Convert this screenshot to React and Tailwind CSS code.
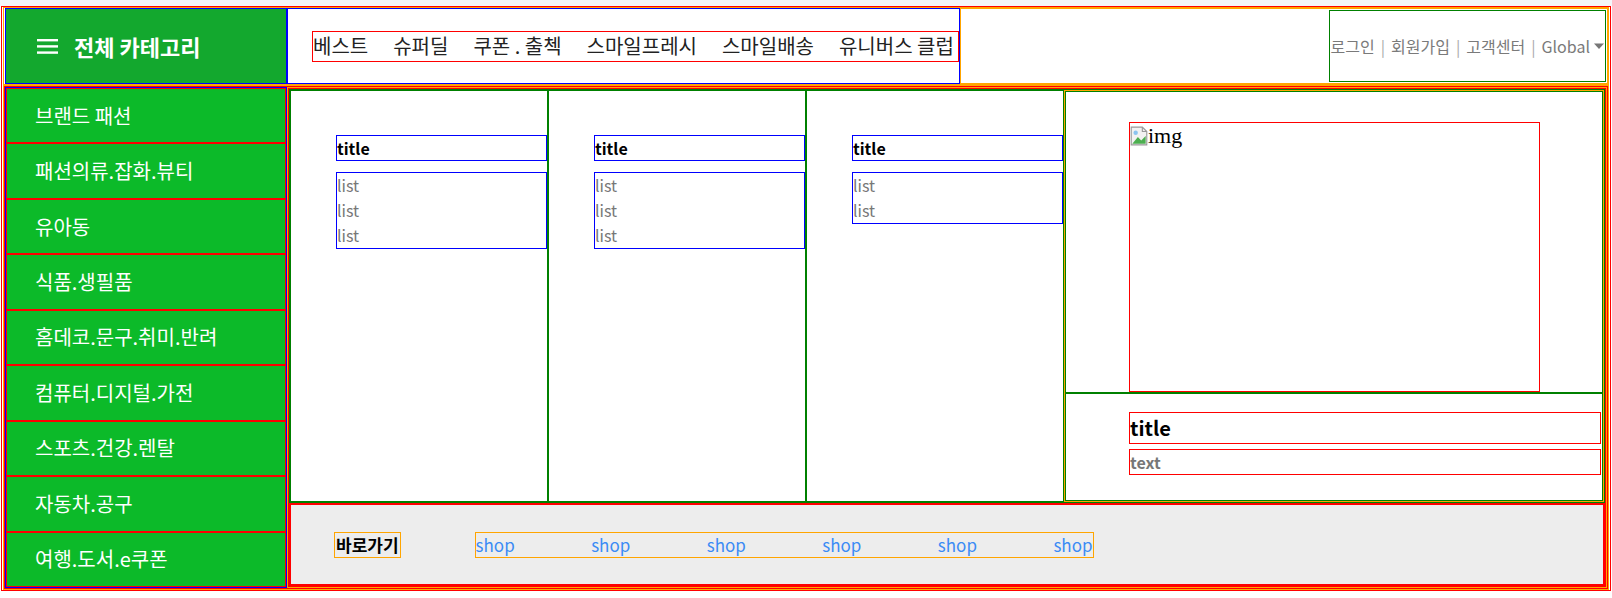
import { ChevronDown } from "lucide-react";

const navItems = ["베스트", "슈퍼딜", "쿠폰 . 출첵", "스마일프레시", "스마일배송", "유니버스 클럽"];

const categories = [
  "브랜드 패션",
  "패션의류.잡화.뷰티",
  "유아동",
  "식품.생필품",
  "홈데코.문구.취미.반려",
  "컴퓨터.디지털.가전",
  "스포츠.건강.렌탈",
  "자동차.공구",
  "여행.도서.e쿠폰",
];

const columns = [3, 3, 2];

const font = { fontFamily: '"Noto Sans CJK KR", "Noto Sans", sans-serif' };

const Column = ({ count }) => (
  <div className="w-[258px] border border-[green] pl-[45px] pt-[44px]">
    <div className="border border-[blue] text-[16px] font-bold leading-[24px] text-black">title</div>
    <ul className="mt-[11px] border border-[blue]">
      {Array.from({ length: count }).map((_, i) => (
        <li key={i} className="text-[16px] leading-[25px] text-[#777]">
          list
        </li>
      ))}
    </ul>
  </div>
);

const App = () => {
  return (
    <div className="min-h-screen bg-white" style={font}>
      <div className="h-[6px] bg-[#f4f6fa]" />

      <div className="mx-[1px] border border-[red] px-[1px]">
        {/* Header */}
        <div className="flex h-[78px] border border-[orange] pl-[1px]">
          <div className="flex w-[282px] items-center gap-[16px] border border-[blue] bg-[#13a82e] pl-[31px]">
            <svg width="21" height="15" viewBox="0 0 21 15">
              <rect x="0" y="0" width="21" height="2.4" fill="white" />
              <rect x="0" y="6.2" width="21" height="2.4" fill="white" />
              <rect x="0" y="12.4" width="21" height="2.4" fill="white" />
            </svg>
            <span className="text-[22px] font-bold text-white">전체 카테고리</span>
          </div>

          <div className="flex w-[673px] items-center border border-[blue] pl-[24px]">
            <ul className="flex h-[31px] flex-1 items-center gap-[25px] border border-[red] pr-[1px]">
              {navItems.map((item) => (
                <li key={item} className="whitespace-nowrap text-[20px] leading-[28px] text-[#222]">
                  {item}
                </li>
              ))}
            </ul>
          </div>

          <div className="flex flex-1 justify-end border border-[orange] py-[1px] pr-[1px]">
            <div className="flex w-[277px] items-center justify-end whitespace-nowrap border border-[green] text-[16px] text-[#7a7a7a]">
              <span>로그인</span>
              <span className="mx-[6px] text-[#aaa]">|</span>
              <span>회원가입</span>
              <span className="mx-[6px] text-[#aaa]">|</span>
              <span>고객센터</span>
              <span className="mx-[6px] text-[#aaa]">|</span>
              <span>Global</span>
              <svg width="12" height="8" viewBox="0 0 12 8" className="ml-[3px]">
                <path d="M1 1.5 L11 1.5 L6 7 Z" fill="#777" />
              </svg>
            </div>
          </div>
        </div>

        {/* Main */}
        <div className="h-[505px] border border-[orange]">
          <div className="flex h-full border border-[red]">
            {/* Sidebar */}
            <div className="flex w-[282px] flex-col border border-[blue]">
              {categories.map((c) => (
                <div
                  key={c}
                  className="flex flex-1 items-center border border-[red] bg-[#0cba29] pl-[28px] text-[20px] text-white"
                >
                  {c}
                </div>
              ))}
            </div>

            {/* Content */}
            <div className="flex flex-1 flex-col border border-[orange]">
              <div className="flex flex-1 flex-col border border-[red]">
                <div className="flex h-[414px] border border-[green]">
                  {columns.map((n, i) => (
                    <Column key={i} count={n} />
                  ))}

                  <div className="flex flex-1 flex-col border border-[orange]">
                    <div className="border border-[green] pl-[63px] pt-[30px]">
                      <div className="h-[270px] w-[411px] border border-[red]">
                        <div className="flex items-center">
                          <svg width="18" height="20" viewBox="0 0 16 18">
                            <path d="M1 1 H11 L15 5 V17 H1 Z" fill="#f2f2f2" stroke="#999" />
                            <path d="M11 1 V5 H15" fill="none" stroke="#999" />
                            <path d="M2 16 L7 10 L10 13 L14 9 V16 Z" fill="#4caf50" />
                            <circle cx="5" cy="6" r="2" fill="#8bc4f0" />
                          </svg>
                          <span className="text-[22px] leading-[26px] text-black" style={{ fontFamily: '"Liberation Serif", serif' }}>
                            img
                          </span>
                        </div>
                      </div>
                    </div>
                    <div className="flex-1 border border-[green] pl-[63px] pr-[1px] pt-[18px]">
                      <div className="border border-[red] text-[20px] font-bold leading-[30px] text-black">title</div>
                      <div className="mt-[5px] border border-[red] text-[16px] font-bold leading-[24px] text-[#777]">
                        text
                      </div>
                    </div>
                  </div>
                </div>

                {/* Shortcut bar */}
                <div className="flex flex-1 items-center border-2 border-[red] bg-[#ededed] pl-[43px]">
                  <span className="border border-[orange] px-[1px] text-[17px] font-bold leading-[24px] text-black">
                    바로가기
                  </span>
                  <div className="ml-[74px] flex w-[619px] justify-between border border-[orange]">
                    {Array.from({ length: 6 }).map((_, i) => (
                      <a key={i} className="text-[17px] leading-[24px] text-[#3b8bf5]">
                        shop
                      </a>
                    ))}
                  </div>
                </div>
              </div>
            </div>
          </div>
        </div>
      </div>
    </div>
  );
};

export default App;
